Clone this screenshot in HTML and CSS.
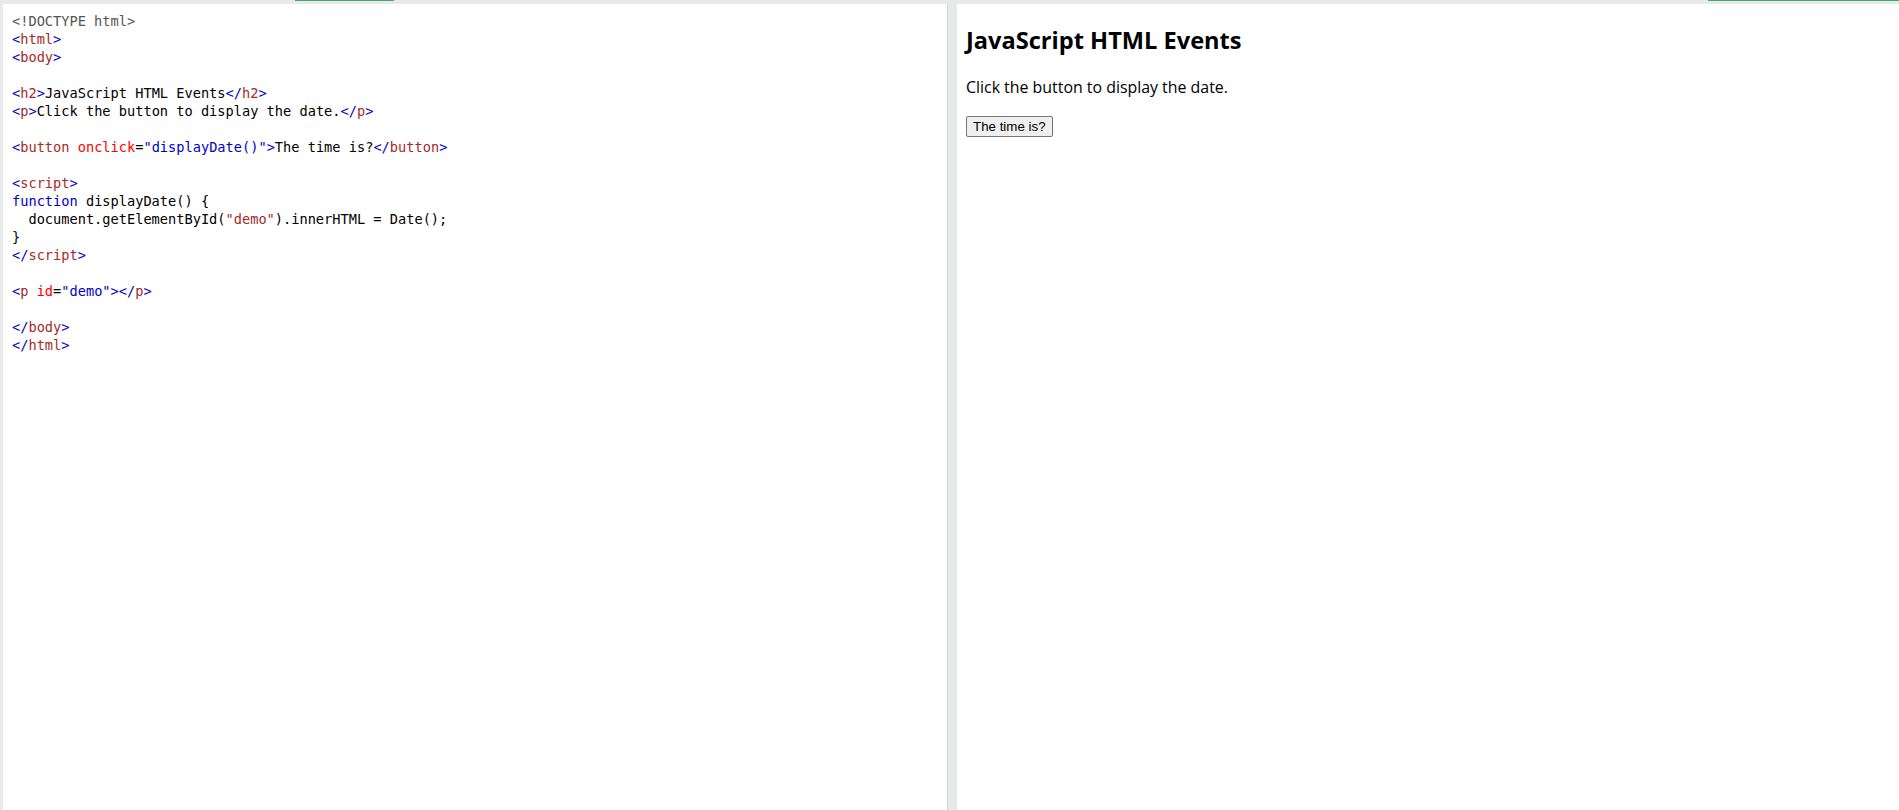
FILE: index.html
```html
<!DOCTYPE html>
<html lang="en">
<head>
    <meta charset="UTF-8">
    <meta name="viewport" content="width=device-width, initial-scale=1.0">
    <title>Tryit Editor</title>
    <link rel="stylesheet" href="styles.css">
</head>
<body>
    <div class="topbar">
        <div class="tab-gap-left"></div>
        <div class="tab-mark tab-code"></div>
        <div class="tab-gap-mid"></div>
        <div class="tab-mark tab-result"></div>
    </div>
    <div class="workspace">
        <div class="code-pane">
<pre class="code"><span class="meta">&lt;!DOCTYPE html&gt;</span>
<span class="br">&lt;</span><span class="tag">html</span><span class="br">&gt;</span>
<span class="br">&lt;</span><span class="tag">body</span><span class="br">&gt;</span>

<span class="br">&lt;</span><span class="tag">h2</span><span class="br">&gt;</span>JavaScript HTML Events<span class="br">&lt;/</span><span class="tag">h2</span><span class="br">&gt;</span>
<span class="br">&lt;</span><span class="tag">p</span><span class="br">&gt;</span>Click the button to display the date.<span class="br">&lt;/</span><span class="tag">p</span><span class="br">&gt;</span>

<span class="br">&lt;</span><span class="tag">button</span> <span class="attr">onclick</span>=<span class="val">"displayDate()"</span><span class="br">&gt;</span>The time is?<span class="br">&lt;/</span><span class="tag">button</span><span class="br">&gt;</span>

<span class="br">&lt;</span><span class="tag">script</span><span class="br">&gt;</span>
<span class="kw">function</span> displayDate() {
  document.getElementById(<span class="str">"demo"</span>).innerHTML = Date();
}
<span class="br">&lt;/</span><span class="tag">script</span><span class="br">&gt;</span>

<span class="br">&lt;</span><span class="tag">p</span> <span class="attr">id</span>=<span class="val">"demo"</span><span class="br">&gt;&lt;/</span><span class="tag">p</span><span class="br">&gt;</span>

<span class="br">&lt;/</span><span class="tag">body</span><span class="br">&gt;</span>
<span class="br">&lt;/</span><span class="tag">html</span><span class="br">&gt;</span></pre>
        </div>
        <div class="result-pane">
            <h2 class="result-title">JavaScript HTML Events</h2>
            <p class="result-text">Click the button to display the date.</p>
            <button class="result-btn" type="button">The time is?</button>
            <p class="result-text" id="demo"></p>
        </div>
    </div>
</body>
</html>
```
FILE: styles.css
```css
body {
    margin: 0;
    padding: 0;
    height: 100vh;
    display: flex;
    flex-direction: column;
    background-color: #e7e9eb;
    overflow: hidden;
}
.topbar {
    height: 4px;
    display: flex;
    align-items: flex-start;
    flex-shrink: 0;
}
.tab-gap-left {
    width: 295px;
}
.tab-gap-mid {
    flex: 1;
}
.tab-mark {
    height: 1px;
    background-color: #3fae6a;
}
.tab-code {
    width: 99px;
}
.tab-result {
    width: 191px;
}
.workspace {
    flex: 1;
    display: flex;
    gap: 9px;
    padding-left: 3px;
    min-height: 0;
}
.code-pane {
    width: 944px;
    background-color: #ffffff;
    border-right: 1px solid #d4d4d4;
}
.code {
    margin: 0;
    padding: 8px 0 0 9px;
    font-family: "DejaVu Sans Mono", "Liberation Mono", monospace;
    font-size: 13.65px;
    line-height: 18px;
    color: #000000;
}
.meta { color: #555555; }
.br { color: #0000cd; }
.tag { color: #a52a2a; }
.attr { color: #ff0000; }
.val { color: #0000cd; }
.kw { color: #0000cd; }
.str { color: #a52a2a; }
.result-pane {
    flex: 1;
    background-color: #ffffff;
    padding: 20px 9px 0;
    font-family: "Open Sans", "Noto Sans", sans-serif;
    color: #000000;
}
.result-title {
    margin: 0 0 20px;
    font-size: 23.6px;
    line-height: 32px;
    font-weight: bold;
}
.result-text {
    margin: 0 0 18px;
    font-size: 15.9px;
    line-height: 22px;
}
.result-btn {
    display: block;
    height: 21px;
    padding: 1px 6px;
    font-family: "Liberation Sans", Arial, sans-serif;
    font-size: 13.33px;
    color: #000000;
    background-color: #efefef;
    border: 1px solid #767676;
    border-radius: 2px;
}
```
